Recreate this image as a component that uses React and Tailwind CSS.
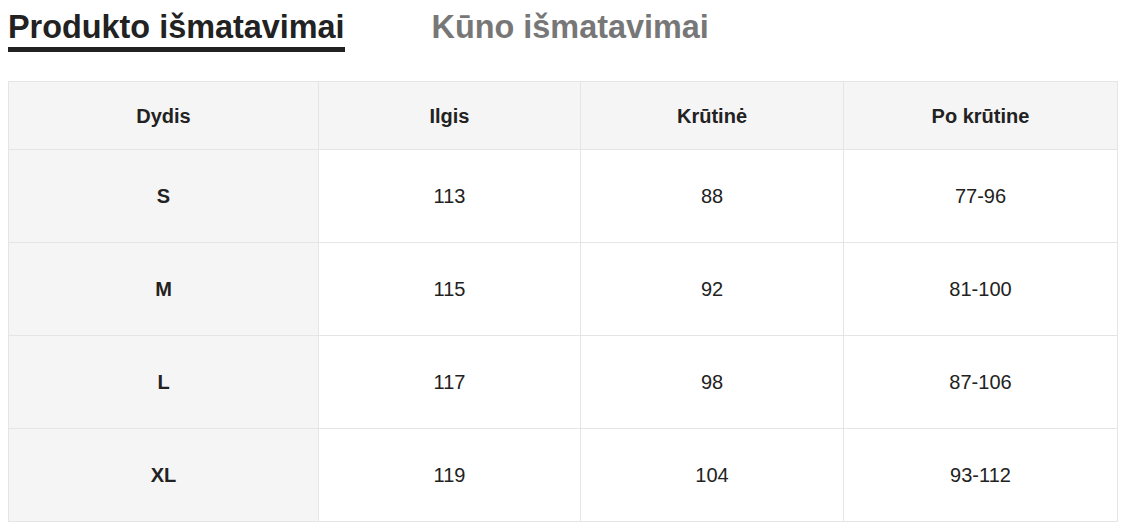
import React from 'react';

const rows = [
  { size: 'S', length: '113', chest: '88', under: '77-96' },
  { size: 'M', length: '115', chest: '92', under: '81-100' },
  { size: 'L', length: '117', chest: '98', under: '87-106' },
  { size: 'XL', length: '119', chest: '104', under: '93-112' },
];

const App = () => {
  return (
    <div className="min-h-screen bg-white px-2 text-[#222] font-['Liberation_Sans',Arial,sans-serif]">
      {/* Tabs */}
      <div className="flex items-start gap-[87px] pt-[9px]">
        <div className="border-b-[5px] border-[#222] pb-[2px] text-[32.4px] font-bold leading-[36px] text-[#222]">
          Produkto išmatavimai
        </div>
        <div className="text-[32.4px] font-bold leading-[36px] text-[#777]">
          Kūno išmatavimai
        </div>
      </div>

      {/* Size table */}
      <table className="mt-[29px] w-[1109px] table-fixed border-collapse text-center text-[20px]">
        <colgroup>
          <col className="w-[310px]" />
          <col className="w-[262px]" />
          <col className="w-[263px]" />
          <col className="w-[274px]" />
        </colgroup>
        <thead>
          <tr className="h-[68px] bg-[#f5f5f5] font-bold">
            <th className="border border-[#e5e5e5]">Dydis</th>
            <th className="border border-[#e5e5e5]">Ilgis</th>
            <th className="border border-[#e5e5e5]">Krūtinė</th>
            <th className="border border-[#e5e5e5]">Po krūtine</th>
          </tr>
        </thead>
        <tbody>
          {rows.map((row) => (
            <tr key={row.size} className="h-[93px]">
              <td className="border border-[#e5e5e5] bg-[#f5f5f5] font-bold">{row.size}</td>
              <td className="border border-[#e5e5e5]">{row.length}</td>
              <td className="border border-[#e5e5e5]">{row.chest}</td>
              <td className="border border-[#e5e5e5]">{row.under}</td>
            </tr>
          ))}
        </tbody>
      </table>
    </div>
  );
};

export default App;
